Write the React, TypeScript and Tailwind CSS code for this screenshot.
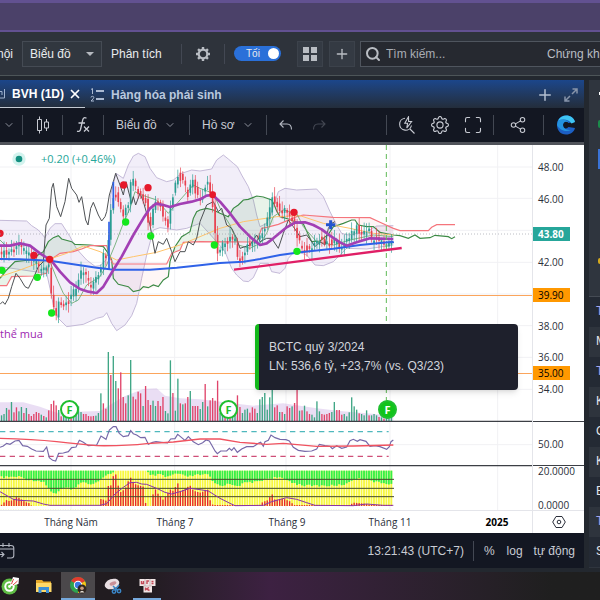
import { useState } from 'react';
import type { ReactNode } from 'react';
import { ChevronDown, Maximize, Plus, Search, Share2, X } from 'lucide-react';
import { BsGear } from 'react-icons/bs';

type Point = [number, number];

// Plot units are thirds of a pixel: 1596 x 1095 for a 532 x 365 plot.
const STEP = 7.45;
const FIRST_BAR = 4.65;
const BAR_COUNT = 158;

const CLOSES: Point[] = [
  [0, 330], [30, 318], [55, 300], [75, 320], [95, 340], [115, 365], [135, 375], [146, 360], [152, 440],
  [160, 480], [168, 522], [176, 480], [200, 480], [225, 435], [245, 380], [260, 400], [275, 425], [300, 370],
  [312, 325], [322, 350], [328, 210], [345, 130], [358, 195], [370, 215], [385, 170], [395, 100], [410, 130],
  [425, 160], [438, 170], [445, 230], [452, 250], [460, 180], [480, 180], [490, 220], [505, 240], [515, 160],
  [535, 85], [545, 105], [555, 130], [565, 155], [575, 100], [590, 150], [600, 165], [610, 145], [618, 112],
  [628, 130], [638, 180], [645, 270], [652, 320], [665, 300], [680, 295], [692, 265], [705, 290], [715, 345],
  [730, 335], [745, 290], [760, 305], [780, 270], [795, 240], [810, 190], [818, 155], [828, 175], [840, 210],
  [855, 195], [870, 210], [885, 240], [892, 280], [900, 300], [920, 315], [940, 305], [958, 280], [972, 285],
  [990, 295], [1005, 290], [1020, 305], [1040, 290], [1055, 265], [1070, 250], [1090, 265], [1105, 250],
  [1115, 285], [1130, 285], [1150, 290], [1170, 300], [1180, 255],
];

// positive: rising day, negative: falling day
const VOLUMES = [
  18, 22, 40, -35, 58, -27, -42, 30, 43, -25, 40, -22, -16, -22, -28, -25, 20, -16, 12, -33, -52, -62, -48, 34,
  -15, 20, 10, 12, -14, 20, 18, 45, 28, -22, -22, -16, -15, -16, 17, 25, 84, -54, -38, 208, -139, 196, 121, -99,
  -147, -73, -54, 78, 184, -74, -66, -89, -84, 46, -106, -64, -49, 62, 46, -61, -46, -73, 31, 24, 183, -85, 32,
  128, -54, 51, -54, -73, 91, -46, -46, -46, 37, 58, -112, 45, -63, -70, -62, -122, 25, 30, -22, 18, -25, 30,
  22, -78, -43, 25, 35, 38, -26, -42, -38, 25, 66, 73, 85, 35, 72, 98, -42, -48, 28, -28, 22, -45, -40, 45, -55,
  -95, 32, -33, 47, -30, -22, 20, 12, 60, 30, -22, -20, -22, -25, 28, 58, -34, -34, -20, 22, 15, 27, 72, 45, 35,
  -24, 22, 18, 33, -18, 18, 22, 18, -13, 12, -8, 10, 14, 30,
];

const GREEN_DEPTH: Point[] = [
  [0, 20], [60, 18], [80, 26], [130, 32], [150, 58], [165, 70], [185, 56], [200, 50], [215, 60], [235, 40],
  [250, 35], [265, 40], [290, 35], [310, 18], [330, 10], [345, 0], [440, 0], [450, 15], [480, 12], [500, 20],
  [530, 8], [560, 18], [600, 12], [625, 12], [640, 35], [660, 45], [690, 40], [715, 45], [740, 35], [770, 34],
  [800, 24], [830, 20], [860, 28], [890, 40], [920, 45], [1000, 45], [1040, 40], [1060, 25], [1100, 25],
  [1130, 35], [1180, 40],
];

const RED_HEIGHT: Point[] = [
  [4, 3], [20, 18], [30, 14], [40, 20], [50, 27], [58, 24], [75, 12], [90, 8], [95, 0], [295, 0], [303, 22],
  [318, 16], [325, 60], [333, 62], [340, 90], [348, 95], [355, 60], [363, 40], [377, 55], [385, 75], [392, 85],
  [400, 68], [415, 62], [430, 58], [438, 0], [456, 0], [460, 45], [467, 50], [475, 35], [490, 18], [497, 28],
  [510, 50], [520, 45], [533, 70], [540, 45], [550, 48], [570, 62], [580, 46], [600, 40], [615, 45], [625, 50],
  [632, 8], [640, 3], [780, 3], [788, 12], [805, 18], [815, 38], [825, 18], [850, 22], [870, 14], [882, 3],
  [1050, 3], [1060, 10], [1095, 7], [1110, 3], [1180, 3],
];

const PRICES = [
  { label: '48.00', y: 22 },
  { label: '46.00', y: 54 },
  { label: '42.00', y: 117 },
  { label: '38.00', y: 181 },
  { label: '36.00', y: 212 },
  { label: '34.00', y: 244 },
  { label: '50.00', y: 299 },
  { label: '20.0000', y: 326 },
  { label: '0.0000', y: 360 },
];

const PRICE_TAGS = [
  { label: '43.80', y: 89, style: 'bg-[#26a69a] text-white font-bold' },
  { label: '39.90', y: 150, style: 'bg-[#ff9800] text-black' },
  { label: '35.00', y: 228, style: 'bg-[#ff9800] text-black' },
];

const MONTHS = [
  { label: 'Tháng Năm', x: 71 },
  { label: 'Tháng 7', x: 175 },
  { label: 'Tháng 9', x: 287 },
  { label: 'Tháng 11', x: 390 },
  { label: '2025', x: 497, bold: true },
];

const WATCHLIST = ['T', 'M', 'T', 'K', 'C', 'K', 'E', 'T', 'S'];

const bars = Array.from({ length: BAR_COUNT }, (_, i) => FIRST_BAR + i * STEP);

function valueAt(points: Point[], x: number) {
  for (let i = 1; i < points.length; i++) {
    if (x <= points[i][0]) {
      const [x0, y0] = points[i - 1];
      const [x1, y1] = points[i];
      return y0 + ((y1 - y0) * (x - x0)) / (x1 - x0);
    }
  }
  return points[points.length - 1][1];
}

function noise(i: number) {
  const n = Math.sin(i * 12.9898) * 43758.5453;
  return n - Math.floor(n);
}

function Candles() {
  return (
    <g>
      {bars.map((x, i) => {
        const open = valueAt(CLOSES, x - STEP) + (noise(i) - 0.5) * 22;
        const close = valueAt(CLOSES, x) + (noise(i + 50) - 0.5) * 22;
        const top = Math.min(open, close);
        const height = Math.max(8, Math.abs(open - close));
        const color = close < open ? '#2a9d92' : '#e8404f';
        return (
          <g key={i} fill={color}>
            <rect x={x - 1} y={top - 6 - noise(i + 9) * 22} width={2} height={height + 14 + noise(i + 9) * 22 + noise(i + 3) * 18} />
            <rect x={x - 2.5} y={top} width={5} height={height} />
          </g>
        );
      })}
    </g>
  );
}

function PricePane() {
  return (
    <g fill="none">
      {/* Bollinger bands */}
      <path
        fill="#7e57c2"
        fillOpacity={0.1}
        d="M0 226 L80 228 95 242 115 255 135 278 150 250 165 236 185 236 210 275 230 312 260 345 285 364 300 362 318 345 328 300 332 150 348 85 370 100 385 60 400 33 415 25 435 35 450 70 470 98 500 110 520 105 545 85 575 75 600 78 635 72 650 45 670 30 685 42 700 55 712 65 725 90 745 125 760 165 770 210 780 245 800 235 815 200 835 140 855 130 890 135 950 132 970 155 990 200 1010 240 1025 265 1045 270 1100 260 1130 243 1180 242 V300 L1100 312 1040 310 1000 350 970 362 945 360 920 330 885 318 865 340 855 370 840 385 815 380 805 355 780 355 760 398 745 410 730 408 710 390 695 370 675 320 650 290 600 235 560 250 530 255 480 248 460 255 440 330 425 400 410 475 395 512 375 540 350 557 335 535 320 503 310 515 290 520 250 538 200 545 175 520 160 480 150 430 140 385 90 378 50 372 0 365Z"
      />
      <g stroke="#b9add0" strokeWidth={2.5}>
        <path d="M0 226 L80 228 95 242 115 255 135 278 150 250 165 236 185 236 210 275 230 312 260 345 285 364 300 362 318 345 328 300 332 150 348 85 370 100 385 60 400 33 415 25 435 35 450 70 470 98 500 110 520 105 545 85 575 75 600 78 635 72 650 45 670 30 685 42 700 55 712 65 725 90 745 125 760 165 770 210 780 245 800 235 815 200 835 140 855 130 890 135 950 132 970 155 990 200 1010 240 1025 265 1045 270 1100 260 1130 243 1180 242" />
        <path d="M1180 300 L1100 312 1040 310 1000 350 970 362 945 360 920 330 885 318 865 340 855 370 840 385 815 380 805 355 780 355 760 398 745 410 730 408 710 390 695 370 675 320 650 290 600 235 560 250 530 255 480 248 460 255 440 330 425 400 410 475 395 512 375 540 350 557 335 535 320 503 310 515 290 520 250 538 200 545 175 520 160 480 150 430 140 385 90 378 50 372 0 365" />
      </g>

      {/* Ichimoku cloud */}
      <g fill="#43a047" fillOpacity={0.12}>
        <path d="M0 400 L20 375 45 350 90 345 130 320 145 290 175 272 185 282 215 290 225 298 270 300 245 312 220 320 180 325 150 345 140 385 100 393 35 395 20 422 0 422Z" />
        <path d="M510 350 L525 305 545 275 570 260 580 220 590 200 600 195 620 190 640 195 660 205 685 215 700 190 730 165 770 153 815 165 822 235 800 247 785 250 770 291 600 290 550 292 540 315 515 325Z" />
      </g>
      <path fill="#ef5350" fillOpacity={0.05} d="M340 357 H500 L505 395 490 405 475 425 400 440 355 418 340 400Z" />
      <path fill="#ef5350" fillOpacity={0.06} d="M890 215 L910 210 1000 217 1110 218 1140 232 1180 250 V270 L1140 262 1120 245 1075 240 1065 225 1030 235 1000 245 910 235Z" />
      <path
        stroke="#3d8b46"
        strokeWidth={3.5}
        d="M0 400 L20 375 45 350 90 345 130 320 145 290 160 278 175 272 185 282 215 290 225 298 270 300 310 305 325 325 335 345 340 400 355 418 385 425 400 440 420 435 430 425 445 428 460 420 475 425 490 405 505 395 510 350 525 305 545 275 570 260 580 220 590 200 600 195 620 190 640 195 660 205 685 215 700 190 715 180 730 165 745 163 770 153 790 156 815 165 822 178 830 198 840 215 865 222 885 230 910 237 935 290 960 288 985 268 1000 245 1030 235 1055 225 1065 225 1075 240 1100 245 1120 245 1140 262 1180 270 1200 272 1225 280 1245 270 1260 280 1290 278 1305 271 1345 275 1355 281 1365 275"
      />
      <path
        stroke="#f5757c"
        strokeWidth={3.5}
        d="M0 422 L20 422 35 395 100 393 140 385 150 345 180 325 220 320 245 312 270 302 320 302 330 340 340 357 500 357 515 325 540 315 550 292 600 290 770 291 785 250 800 247 835 238 890 215 910 210 1000 217 1110 218 1140 232 1180 250 1200 257 1285 257 1295 247 1310 239 1365 239"
      />
      <path stroke="#ffc46b" strokeWidth={3} d="M0 395 L60 375 140 345 200 325 250 303 300 320 350 345 400 335 470 322 540 300 600 275 660 250 730 230 830 215 900 212 970 235 1050 250 1120 265 1180 270" />
      <path
        stroke="#66a86c"
        strokeWidth={2.5}
        d="M0 285 L15 300 M150 350 L170 400 190 445 215 475 235 465 260 420 300 395 320 360 345 300 370 235 390 190 405 140 425 150 470 165 505 205 540 165 580 120 600 130 640 145 665 200 690 240 715 300 750 310 780 295 800 265 820 215 850 195 890 205 910 245 950 290 1000 300 1050 285 1120 270 1180 275"
      />
      <path
        stroke="#4e5154"
        strokeWidth={3}
        d="M0 478 L8 470 15 478 25 460 35 425 48 385 60 400 75 425 85 430 100 400 115 365 130 350 138 240 148 220 155 130 160 115 170 185 182 215 195 170 206 100 215 130 230 150 237 172 245 155 257 225 264 240 272 190 280 172 295 210 305 228 315 215 320 200 328 150 340 110 347 85 360 120 370 150 378 110 395 175 400 155 407 180 420 145 430 170 450 240 465 325 475 290 490 298 500 280 515 320 525 350 540 320 555 320 565 290 580 300 590 280 600 230 620 180 640 170 655 200 665 190 680 240 695 250 710 280 720 310 750 300 770 270 780 290 800 280 815 280 835 310 850 265 865 225 880 245 900 275 920 270 935 290 945 305 960 290 975 300 985 250 995 235 1005 230"
      />

      <Candles />

      <path stroke="#2f62e8" strokeWidth={6} d="M0 342 L60 343 150 347 220 358 290 368 330 373 340 374 H450 L530 368 600 361 660 354 730 350 780 342 840 330 900 322 1000 311 1080 300 1180 290" />
      <path stroke="#2f62e8" strokeWidth={5} d="M327 230 V372 M340 110 V190" />
      <path
        stroke="#a23fb4"
        strokeWidth={8}
        strokeLinejoin="round"
        d="M0 302 L30 302 60 295 90 302 120 325 155 348 180 380 210 412 240 432 265 440 290 444 310 425 340 375 365 335 400 270 430 220 450 190 468 176 490 180 510 186 540 177 575 170 600 163 620 152 638 150 660 170 690 205 720 245 750 275 780 300 800 295 820 280 860 247 885 233 915 232 940 240 965 253 990 272 1020 292 1040 302 1070 292 1110 280 1180 282"
      />
      <path stroke="#e01f66" strokeWidth={7} d="M702 374 L1205 309" />

      <g fill="#e6192b">
        <circle cx={0} cy={265} r={11} />
        <circle cx={102} cy={331} r={11} />
        <circle cx={149} cy={343} r={11} />
        <circle cx={371} cy={120} r={11} />
        <circle cx={444} cy={128} r={11} />
        <circle cx={638} cy={149} r={10} />
        <circle cx={882} cy={202} r={11} />
      </g>
      <g fill="#14e81c">
        <circle cx={6} cy={376} r={11} />
        <circle cx={112} cy={397} r={11} />
        <circle cx={155} cy={504} r={11} />
        <circle cx={377} cy={231} r={11} />
        <circle cx={452} cy={273} r={11} />
        <circle cx={643} cy={300} r={11} />
        <circle cx={891} cy={319} r={11} />
      </g>
      <path stroke="#2353cf" strokeWidth={9} d="M992 226 V253 M978 239 H1006" />
      <path stroke="#2f6bd8" strokeWidth={5} d="M1170 292 H1182" />
    </g>
  );
}

function VolumePane() {
  return (
    <g>
      <path
        fill="#b48ad8"
        fillOpacity={0.28}
        d="M0 829 V772 H70 L120 785 170 803 230 800 300 798 330 780 370 755 430 732 470 730 495 752 540 760 600 763 700 775 760 782 850 775 950 790 1020 798 1160 810 1180 811 V829Z"
      />
      {VOLUMES.map((v, i) => (
        <rect
          key={i}
          x={bars[i] - 2}
          y={829 - Math.abs(v)}
          width={4}
          height={Math.abs(v)}
          fill={v > 0 ? '#3fa685' : '#e0446a'}
        />
      ))}
    </g>
  );
}

function RsiPane() {
  return (
    <g fill="none">
      <path stroke="#4fb8bd" strokeWidth={4} strokeDasharray="16 13" d="M0 860 H1166" />
      <path stroke="#cf4f78" strokeWidth={4} strokeDasharray="16 13" d="M0 934 H1166" />
      <path
        stroke="#7668a8"
        strokeWidth={3.5}
        d="M0 907 L10 903 20 895 30 898 45 888 57 886 68 902 82 904 95 912 108 918 130 919 140 906 148 938 158 946 167 948 176 925 190 924 205 920 215 908 228 906 238 886 250 892 265 902 290 900 303 873 318 883 328 855 340 845 348 845 358 865 370 875 385 872 392 857 400 866 410 870 422 878 435 877 445 898 458 892 468 890 485 892 503 894 512 882 525 881 533 868 545 878 555 886 565 875 580 890 595 899 608 893 618 885 628 888 635 900 645 918 652 926 662 918 680 918 688 910 695 916 702 908 712 922 725 912 740 905 760 905 775 895 782 892 790 904 795 890 805 886 813 870 825 878 840 883 858 884 868 888 880 907 895 916 915 919 935 918 950 912 958 898 975 902 990 904 997 911 1010 902 1025 910 1040 906 1050 887 1060 883 1072 889 1080 884 1098 889 1110 904 1125 902 1140 905 1160 913 1168 905 1173 890 1180 885"
      />
      <path stroke="#f0525f" strokeWidth={4} d="M0 880 Q100 882 170 890 T290 902 Q380 903 440 896 L520 891 600 882 660 882 720 892 800 898 850 895 950 904 1060 903 1180 900" />
    </g>
  );
}

function FlowPane() {
  return (
    <g>
      {bars.map((x, i) => {
        const depth = valueAt(GREEN_DEPTH, x) + (noise(i) - 0.5) * 6;
        const red = valueAt(RED_HEIGHT, x);
        return (
          <g key={i}>
            <rect x={x - 3} y={977} width={5.5} height={106} fill="#f8f840" />
            {depth > 4 && <rect x={x - 3} y={977} width={5.5} height={depth} fill="#35f04a" />}
            {red > 1 && <rect x={x - 2} y={1083 - red} width={4} height={red} fill="#e8262f" />}
            <rect x={x - 3} y={1094} width={3} height={1} fill="#e8e36a" />
          </g>
        );
      })}
      <path stroke="#454a2c" strokeWidth={3} d="M0 1003 H1182 M0 1030 H1182 M0 1055 H1182" />
      <path
        fill="none"
        stroke="#8a35a5"
        strokeWidth={3}
        d="M0 1040 L40 1063 60 1066 100 1068 130 1077 150 1081 300 1081 320 1076 345 1047 370 1027 390 1013 410 1012 425 1017 440 1018 470 1030 495 1042 515 1047 540 1040 570 1030 600 1034 625 1038 660 1060 690 1075 705 1082 790 1081 815 1070 860 1058 890 1063 920 1073 945 1081 1060 1082 1100 1077 1150 1081 1180 1081"
      />
    </g>
  );
}

function FinancialMark({ position, filled }: { position: string; filled?: boolean }) {
  return (
    <button
      className={`absolute top-[255px] flex size-[19px] items-center justify-center rounded-full border-2 border-[#1fbf2f] font-['Open_Sans',sans-serif] text-[11px] font-bold leading-none ${position} ${
        filled ? 'bg-[#11c41b] text-white' : 'bg-white text-[#1fbf2f]'
      }`}
    >
      F
    </button>
  );
}

function Chart() {
  return (
    <section className="relative bg-white font-['Open_Sans',sans-serif] text-[10px] text-[#2a2e39]">
      <div className="flex h-[365px]">
        <svg className="h-full min-w-0 flex-1" viewBox="0 0 1596 1095" preserveAspectRatio="none">
          <path stroke="#f1f1f4" strokeWidth={3} d="M0 66 H1596 M0 160 H1596 M0 256 H1596 M0 352 H1596 M0 447 H1596 M0 542 H1596 M0 637 H1596 M0 733 H1596 M0 899 H1596 M213 0 V1095 M524 0 V1095 M858 0 V1095 M1170 0 V1095 M1493 0 V1095" />
          <path stroke="#fba55c" strokeWidth={3} d="M0 451.5 H1596 M0 685.5 H1596" />
          <VolumePane />
          <PricePane />
          <path stroke="#9a9fa6" strokeWidth={2} strokeDasharray="3 6" d="M0 267 H1596" />
          <path stroke="#5fba57" strokeWidth={3} strokeDasharray="15 12" d="M1159 0 V770" />
          <RsiPane />
          <FlowPane />
          <path stroke="#3c3f45" strokeWidth={4} d="M0 829 H1596 M0 962 H1596" />
          <circle cx={57} cy={42} r={20} fill="#d3f3ee" />
          <circle cx={57} cy={42} r={10} fill="#148f80" />
        </svg>
        <div className="relative w-[52px] shrink-0 border-l border-[#e4e5ea]">
          <div className="absolute top-[276px] h-px w-full bg-[#3c3f45]" />
          <div className="absolute top-[320px] h-px w-full bg-[#3c3f45]" />
          {PRICES.map((p) => (
            <span key={p.label} className="absolute left-[5px] -translate-y-1/2 leading-none" style={{ top: p.y }}>
              {p.label}
            </span>
          ))}
          {PRICE_TAGS.map((p) => (
            <span key={p.label} className={`absolute left-0 w-[37px] -translate-y-1/2 pl-[5px] leading-[14px] ${p.style}`} style={{ top: p.y }}>
              {p.label}
            </span>
          ))}
        </div>
      </div>

      <div className="flex h-[23px] border-t border-[#e4e5ea]">
        <div className="relative flex-1">
          {MONTHS.map((m) => (
            <span
              key={m.label}
              className={`absolute top-1 -translate-x-1/2 whitespace-nowrap leading-[14px] ${m.bold ? 'font-bold text-black' : ''}`}
              style={{ left: `${(m.x / 532) * 100}%` }}
            >
              {m.label}
            </span>
          ))}
        </div>
        <button aria-label="Cài đặt trục" className="flex w-[52px] items-center justify-center border-l border-[#e4e5ea]">
          <svg className="size-[14px]" viewBox="0 0 14 14" fill="none" stroke="#2a2e39">
            <path d="M4 1.5 h6 L13.3 7 10 12.5 H4 L.7 7Z" />
            <circle cx={7} cy={7} r={1.8} />
          </svg>
        </button>
      </div>

      <p className="absolute left-[41px] top-[7px] text-[11px] leading-[14px] text-[#26a69a]">+0.20 (+0.46%)</p>
      <p className="absolute left-0 top-[182px] text-[11px] leading-[14px] text-[#9c27b0]">thể mua</p>

      <FinancialMark position="left-[60px]" />
      <FinancialMark position="left-[219px]" />
      <FinancialMark position="left-[378px]" filled />

      <div
        role="tooltip"
        className="absolute left-[255px] top-[179px] h-[66px] w-[263px] rounded border-l-4 border-[#12b81a] bg-[#1e202c] pl-[10px] pt-[14px] font-['Liberation_Sans',sans-serif] text-xs leading-[19px] text-[#d1d4dc] shadow-md"
      >
        <p>BCTC quý 3/2024</p>
        <p>LN: 536,6 tỷ, +23,7% (vs. Q3/23)</p>
      </div>
    </section>
  );
}

function Divider({ className = '' }: { className?: string }) {
  return <span className={`h-5 w-px shrink-0 bg-[#434853] ${className}`} />;
}

function Tool({ label, className = '', children }: { label: string; className?: string; children: ReactNode }) {
  return (
    <button aria-label={label} className={`flex shrink-0 items-center justify-center ${className}`}>
      {children}
    </button>
  );
}

function TopBar() {
  const [dark, setDark] = useState(true);

  return (
    <header className="flex h-11 items-center overflow-hidden border-b border-[#4d5558] bg-[#2e333b] text-[#e9ebee]">
      <a href="#" className="-ml-[3px] w-[25px] shrink-0">
        nội
      </a>
      <div className="relative w-20 shrink-0">
        <select aria-label="Chế độ xem" className="h-[26px] w-full appearance-none border border-[#454b54] bg-[#31373f] pl-[7px] text-xs outline-none">
          <option>Biểu đồ</option>
        </select>
        <svg className="pointer-events-none absolute right-2 top-[11px] h-1 w-2" viewBox="0 0 8 4" fill="#b5b9bf">
          <path d="M0 0 H8 L4 4Z" />
        </svg>
      </div>
      <a href="#" className="ml-[9px] w-[70px] shrink-0 whitespace-nowrap">
        Phân tích
      </a>
      <Divider />
      <Tool label="Cài đặt" className="mx-[13px] w-4">
        <svg className="size-4" viewBox="0 0 16 16" fill="none" stroke="#b9bdc3">
          <circle cx={8} cy={8} r={4.3} strokeWidth={2.2} />
          <path strokeWidth={2.4} d="M8 1 V3.5 M8 12.5 V15 M1 8 H3.5 M12.5 8 H15 M3.05 3.05 L4.8 4.8 M11.2 11.2 L12.95 12.95 M3.05 12.95 L4.8 11.2 M11.2 4.8 L12.95 3.05" />
        </svg>
      </Tool>
      <Divider />
      <label className="relative ml-[9px] flex h-[15px] w-[47px] shrink-0 items-center rounded-full bg-[#2a70d9] pl-3 text-[10px] leading-none">
        <input type="checkbox" className="peer sr-only" checked={dark} onChange={() => setDark(!dark)} />
        Tối
        <span className="absolute left-[2px] size-[11px] rounded-full bg-white peer-checked:left-[34px]" />
      </label>
      <Tool label="Bố cục" className="ml-4 size-[26px] border border-[#3c424b] bg-[#343a43]">
        <span className="grid grid-cols-2 gap-[2px]">
          <i className="size-[6px] bg-[#b9bdc3]" />
          <i className="size-[6px] bg-[#b9bdc3]" />
          <i className="size-[6px] bg-[#b9bdc3]" />
          <i className="size-[6px] bg-[#b9bdc3]" />
        </span>
      </Tool>
      <Tool label="Thêm" className="ml-[6px] size-[26px] border border-[#3c424b] bg-[#343a43]">
        <Plus className="size-4 text-[#b9bdc3]" strokeWidth={2} />
      </Tool>
      <div className="ml-[5px] flex h-[26px] min-w-0 flex-1 items-center overflow-hidden border border-r-0 border-[#4f555e] bg-[#262930]">
        <Search className="ml-1 size-4 shrink-0 text-[#b9bdc3]" strokeWidth={3} />
        <input aria-label="Tìm kiếm" placeholder="Tìm kiếm..." className="ml-[5px] min-w-0 flex-1 bg-transparent outline-none placeholder:text-[#a9adb4]" />
        <span className="w-[53px] shrink-0 whitespace-nowrap text-[#b9bdc3]">Chứng khoán</span>
      </div>
    </header>
  );
}

function TabBar() {
  return (
    <nav className="flex h-7 items-center bg-linear-to-b from-[#1b468b] to-[#232d3b] pt-px font-bold">
      <div className="flex h-full w-[85px] items-center border-b border-[#c3c9d2] text-white">
        <svg className="mr-[7px] h-3 w-[5px]" viewBox="0 0 5 12" fill="none" stroke="#9fb3d0">
          <path d="M4.5 1 V10 H0 M0 3.5 H2 V7" />
        </svg>
        <a href="#" className="whitespace-nowrap">
          BVH (1D)
        </a>
        <Tool label="Đóng" className="ml-1">
          <X className="size-[14px]" strokeWidth={3} />
        </Tool>
      </div>
      <svg className="ml-[5px] h-4 w-4" viewBox="0 0 16 16" fill="none" stroke="#aab9d1">
        <path d="M1 2.5 L2.5 1.5 V7 M1 10.5 Q1 9.3 2.4 9.3 T3.8 10.5 Q3.8 11.5 1 14 H4" />
        <path strokeWidth={2} d="M6 4 H14 M6 12 H14" />
      </svg>
      <a href="#" className="ml-[5px] text-[#b9c8de]">
        Hàng hóa phái sinh
      </a>
      <Tool label="Thêm tab" className="ml-auto">
        <Plus className="size-[18px] text-[#b3bfd1]" strokeWidth={2} />
      </Tool>
      <Tool label="Phóng to" className="ml-[10px] mr-[6px]">
        <svg className="size-[14px]" viewBox="0 0 14 14" fill="none" stroke="#8794aa" strokeWidth={1.5}>
          <path d="M8.5 1 H13 V5.5 M13 1 L8 6 M5.5 13 H1 V8.5 M1 13 L6 8" />
        </svg>
      </Tool>
    </nav>
  );
}

function ChartTools() {
  return (
    <div className="flex h-[34px] items-center bg-[#131722] text-[#c8cbd3]">
      <Tool label="Khung thời gian" className="w-[22px] pr-1">
        <ChevronDown className="size-3 text-[#8d919c]" />
      </Tool>
      <Divider />
      <Tool label="Kiểu nến" className="w-[39px]">
        <svg className="h-[18px] w-[14px]" viewBox="0 0 14 18" fill="none" stroke="#c8cbd3">
          <path d="M3.5 .5 V3.5 M3.5 14.5 V17.5 M1.5 3.5 H5.5 V14.5 H1.5Z M10.5 3 V6 M10.5 12 V15 M8.5 6 H12.5 V12 H8.5Z" />
        </svg>
      </Tool>
      <Divider />
      <Tool label="Chỉ báo" className="w-10">
        <svg className="h-[18px] w-[14px]" viewBox="0 0 14 18" fill="none" stroke="#c8cbd3" strokeWidth={1.3}>
          <path d="M10.5 2.2 Q7.5 .5 6.7 4 L4.5 13.5 Q3.8 16.2 1 15.2 M2.5 7 H9 M8 10.5 L13 15.5 M13 10.5 L8 15.5" />
        </svg>
      </Tool>
      <Divider />
      <button className="ml-3 flex w-[73px] items-center whitespace-nowrap">
        Biểu đồ
        <ChevronDown className="ml-[7px] size-3 text-[#8d919c]" />
      </button>
      <Divider />
      <button className="ml-3 flex w-16 items-center whitespace-nowrap">
        Hồ sơ
        <ChevronDown className="ml-[7px] size-3 text-[#8d919c]" />
      </button>
      <Divider />
      <Tool label="Hoàn tác" className="ml-3">
        <svg className="h-3 w-[14px]" viewBox="0 0 14 12" fill="none" stroke="#b4b8c2" strokeWidth={1.1}>
          <path d="M4.5 1.5 L1 5 4.5 8.5 M1 5 H8 Q12.5 5 12.5 10.5" />
        </svg>
      </Tool>
      <Tool label="Làm lại" className="ml-[19px]">
        <svg className="h-3 w-[14px]" viewBox="0 0 14 12" fill="none" stroke="#434752" strokeWidth={1.1}>
          <path d="M9.5 1.5 L13 5 9.5 8.5 M13 5 H6 Q1.5 5 1.5 10.5" />
        </svg>
      </Tool>
      <Divider className="ml-auto" />
      <Tool label="Tìm nhanh" className="ml-[11px]">
        <svg className="size-[18px]" viewBox="0 0 18 18" fill="none" stroke="#c8cbd3" strokeWidth={1.1}>
          <path d="M7 2.2 A6 6 0 1 0 13.5 9.5 M12 13 L16.5 17.5 M10.5 .8 L6.8 7.2 H9.6 L8.8 12 L13.6 5.5 H10.6Z" />
        </svg>
      </Tool>
      <Tool label="Thiết lập" className="ml-[15px]">
        <BsGear className="size-[18px]" />
      </Tool>
      <Tool label="Toàn màn hình" className="ml-[14px]">
        <Maximize className="size-5" strokeWidth={1.3} />
      </Tool>
      <Divider className="ml-[10px]" />
      <Tool label="Chia sẻ" className="ml-[15px]">
        <Share2 className="size-[18px]" strokeWidth={1.4} />
      </Tool>
      <Divider className="ml-4" />
      <a href="#" aria-label="Trang chủ" className="ml-3 mr-2">
        <svg className="size-5" viewBox="0 0 20 20">
          <path fill="#1c5fc4" d="M10 0.5 C4.5 .5 1 4.7 1 10 S4.5 19.5 10 19.5 C14.8 19.5 18 17 19 13 L12.5 12 C10.5 14.5 7 13.5 7 10 S10.5 5.5 12.5 8 L19 7 C18 3 14.8 .5 10 .5Z" />
          <path fill="#3fc5f2" d="M2 5.5 C4 2 7 .5 10 .5 C14.8 .5 18 3 19 7 L15.5 8.5 C13 4 7 3.5 2 5.5Z" />
          <path fill="#2492df" d="M2 5.5 C7 3.5 11 4.5 13 8 C10 5.5 7 7 7 10 C7 14 11 15 15 15 C9 18 3 14 1 10Z" />
        </svg>
      </a>
    </div>
  );
}

function StatusBar() {
  return (
    <div className="flex h-[35px] items-center overflow-hidden bg-[#131722] pt-px text-[#c8cbd3]">
      <Tool label="Đi tới ngày">
        <svg className="h-4 w-[15px]" viewBox="0 0 15 16" fill="none" stroke="#b4b8c2" strokeWidth={1.1}>
          <path d="M0 2.5 H11 Q13.8 2.5 13.8 5 V12.5 Q13.8 15 11 15 H7 M0 6 H13.8 M3 0 V4 M9 0 V4 M0 11.5 H4 M1.5 9 L4 11.5 1.5 14" />
        </svg>
      </Tool>
      <button className="ml-auto whitespace-nowrap">13:21:43 (UTC+7)</button>
      <Divider className="ml-[9px]" />
      <button className="ml-[10px]">%</button>
      <button className="ml-3">log</button>
      <button className="ml-[11px] mr-[9px] whitespace-nowrap">tự động</button>
    </div>
  );
}

function SidePanel() {
  return (
    <aside className="w-[11px] shrink-0 overflow-hidden bg-[#2f353e]">
      <div className="flex h-[217px] flex-col items-end border-b border-[#454b54]">
        <i className="mt-3 h-[3px] w-px bg-white" />
        <i className="mt-[25px] h-2 w-[2px] rounded-l bg-[#1b8a4a]" />
        <i className="mt-[21px] h-5 w-[2px] bg-[#3a73d6]" />
        <i className="mt-[89px] h-[6px] w-[2px] rounded-l bg-[#d5a91d]" />
      </div>
      <ul>
        {WATCHLIST.map((name, i) => (
          <li
            key={i}
            className={`h-[30px] pl-[7px] leading-[29px] odd:bg-[#242a34] even:bg-[#2e343d] ${name === 'T' ? 'text-[#a3a5ec]' : 'text-[#e4e6ea]'}`}
          >
            {name}
          </li>
        ))}
      </ul>
    </aside>
  );
}

function Taskbar() {
  return (
    <footer className="flex h-7 bg-linear-to-r from-[#211c20] from-[24%] via-[#3d2142] via-[45%] to-[#1f1f1f] to-[92%]">
      <Tool label="Cốc Cốc" className="ml-px w-[18px]">
        <svg className="size-[18px]" viewBox="0 0 18 18">
          <circle cx={8.5} cy={9.5} r={8} fill="#5fbd45" />
          <circle cx={8.5} cy={9.5} r={5.2} fill="#fff" />
          <circle cx={8.5} cy={9.5} r={3.2} fill="#5fbd45" />
          <path fill="#fff" d="M8.5 9.5 L12 0 L18 1 L17.5 7Z" />
          <path stroke="#d44" d="M12.5 2 L10.5 7 M16.5 4 L12 8" />
          <circle cx={8.5} cy={9.5} r={1.4} fill="#fff" />
        </svg>
      </Tool>
      <Tool label="Thư mục" className="ml-4 w-[18px]">
        <svg className="h-4 w-[18px]" viewBox="0 0 18 16">
          <path fill="#e5a92b" d="M1 2 H7 L8.5 3.5 H16 V13 H1Z" />
          <path fill="#ffd968" d="M1 5 H16.5 V14 H1Z" />
          <path fill="#3c8fd6" d="M3.5 9 H14 V15 H11 V12 H6.5 V15 H3.5Z" />
        </svg>
      </Tool>
      <Tool label="Chrome" className="ml-2 w-[34px] border-b-2 border-[#76a9dc] bg-[#4b484b]">
        <svg className="size-[18px]" viewBox="0 0 18 18">
          <circle cx={9} cy={9} r={8} fill="#2fa34f" />
          <path fill="#e23b2e" d="M9 9 L2.1 5 A8 8 0 0 1 16 5.2Z" />
          <path fill="#f8c517" d="M9 9 L16 5.2 A8 8 0 0 1 9 17Z" />
          <circle cx={9} cy={9} r={4.2} fill="#fff" />
          <circle cx={9} cy={9} r={3.2} fill="#3b78e0" />
          <circle cx={13} cy={13} r={4.5} fill="#2f2620" />
          <circle cx={13} cy={12.2} r={1.8} fill="#c99b7d" />
          <path fill="#e5ddd4" d="M10.5 16.5 Q13 13 15.5 16.5Z" />
        </svg>
      </Tool>
      <Tool label="Công cụ cắt" className="ml-[9px] w-[18px]">
        <svg className="h-4 w-[18px]" viewBox="0 0 18 16">
          <ellipse cx={8} cy={6} rx={7.5} ry={5} fill="#e9dfe3" transform="rotate(-20 8 6)" />
          <ellipse cx={9} cy={5.5} rx={3.5} ry={1.8} fill="#c98f97" transform="rotate(-20 9 5.5)" />
          <g fill="none" stroke="#3a86c8" strokeWidth={1.5}>
            <path d="M9 8 L14 13 M15 7 L11 12" />
            <circle cx={10} cy={13.5} r={1.7} />
            <circle cx={15} cy={13} r={1.7} />
          </g>
        </svg>
      </Tool>
      <Tool label="Bộ gõ" className="ml-[11px] w-7 border-b-2 border-[#76a9dc]">
        <svg className="h-[15px] w-[17px]" viewBox="0 0 17 15">
          <path fill="#f1e6e6" d="M.5 1 H16.5 V8 H13 V14.5 H4.5 V8 H.5Z" />
          <path fill="none" stroke="#c44a58" strokeWidth={1.4} d="M2.5 3 V5.5 H4.5 V3 M8 6 V3 H10 M12.5 3.5 H14.5 M12.5 5.5 H14.5 M6.5 9.5 V12.5 M10 9.5 L7.5 11 L10.5 12.5" />
          <path stroke="#b8a4ab" strokeWidth={0.7} d="M6 1 V8 M11 1 V8 M4.5 8 H13" />
        </svg>
      </Tool>
    </footer>
  );
}

export default function App() {
  return (
    <div className="min-h-screen overflow-hidden bg-[#23282f] font-['Liberation_Sans',sans-serif] text-xs">
      <div className="h-8 border-b-2 border-t-[3px] border-[#625191] bg-[#4b4169]" />
      <TopBar />
      <div className="flex gap-[5px] pb-1 pt-1">
        <main className="min-w-0 flex-1">
          <TabBar />
          <ChartTools />
          <div className="h-[3px] bg-[#50535a]" />
          <Chart />
          <StatusBar />
        </main>
        <SidePanel />
      </div>
      <Taskbar />
    </div>
  );
}
